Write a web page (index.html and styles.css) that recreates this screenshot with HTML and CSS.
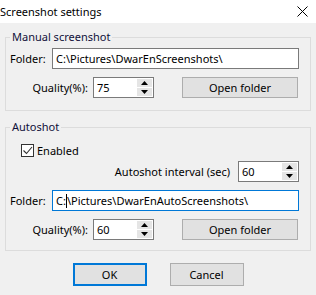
FILE: index.html
```html
<!DOCTYPE html>
<html lang="en">
<head>
    <meta charset="UTF-8">
    <title>Screenshot settings</title>
    <link rel="stylesheet" href="styles.css">
</head>
<body>
    <div class="titlebar">
        <span class="title">Screenshot settings</span>
        <svg class="close" width="11" height="11" viewBox="0 0 11 11">
            <path d="M0.5 0.5 L10.5 10.5 M10.5 0.5 L0.5 10.5" stroke="#000" stroke-width="1" fill="none"/>
        </svg>
    </div>

    <div class="dialog">
        <fieldset class="group manual">
            <legend>Manual screenshot</legend>
            <div class="row folder-row">
                <label class="folder-label">Folder:</label>
                <input class="text" type="text" value="C:\Pictures\DwarEnScreenshots\">
            </div>
            <div class="row quality-row">
                <label class="quality-label">Quality(%):</label>
                <div class="spin">
                    <span class="spin-value">75</span>
                    <div class="spin-buttons">
                        <span class="spin-btn"><svg width="7" height="4" viewBox="0 0 7 4"><path d="M3.5 0 L7 4 L0 4 Z" fill="#000"/></svg></span>
                        <span class="spin-btn"><svg width="7" height="4" viewBox="0 0 7 4"><path d="M0 0 L7 0 L3.5 4 Z" fill="#000"/></svg></span>
                    </div>
                </div>
                <button class="btn open-btn">Open folder</button>
            </div>
        </fieldset>

        <fieldset class="group auto">
            <legend>Autoshot</legend>
            <div class="row check-row">
                <span class="checkbox">
                    <svg width="11" height="11" viewBox="0 0 11 11"><path d="M1.5 5.5 L4.5 8.5 L10 2" stroke="#333" stroke-width="1.1" fill="none"/></svg>
                </span>
                <span class="check-label">Enabled</span>
            </div>
            <div class="row interval-row">
                <label class="interval-label">Autoshot interval (sec)</label>
                <div class="spin">
                    <span class="spin-value">60</span>
                    <div class="spin-buttons">
                        <span class="spin-btn"><svg width="7" height="4" viewBox="0 0 7 4"><path d="M3.5 0 L7 4 L0 4 Z" fill="#000"/></svg></span>
                        <span class="spin-btn"><svg width="7" height="4" viewBox="0 0 7 4"><path d="M0 0 L7 0 L3.5 4 Z" fill="#000"/></svg></span>
                    </div>
                </div>
            </div>
            <div class="row folder-row">
                <label class="folder-label">Folder:</label>
                <div class="text focused">C:<span class="caret"></span>\Pictures\DwarEnAutoScreenshots\</div>
            </div>
            <div class="row quality-row">
                <label class="quality-label">Quality(%):</label>
                <div class="spin">
                    <span class="spin-value">60</span>
                    <div class="spin-buttons">
                        <span class="spin-btn"><svg width="7" height="4" viewBox="0 0 7 4"><path d="M3.5 0 L7 4 L0 4 Z" fill="#000"/></svg></span>
                        <span class="spin-btn"><svg width="7" height="4" viewBox="0 0 7 4"><path d="M0 0 L7 0 L3.5 4 Z" fill="#000"/></svg></span>
                    </div>
                </div>
                <button class="btn open-btn">Open folder</button>
            </div>
        </fieldset>

        <div class="actions">
            <button class="btn action-btn default">OK</button>
            <button class="btn action-btn">Cancel</button>
        </div>
    </div>
</body>
</html>
```

FILE: styles.css
```css
* {
    box-sizing: border-box;
}

body {
    margin: 0;
    width: 316px;
    height: 295px;
    background-color: #f0f0f0;
    font-family: 'Noto Sans', sans-serif;
    font-size: 11px;
    color: #000;
    overflow: hidden;
}

.titlebar {
    height: 23px;
    background-color: #fff;
    display: flex;
    align-items: center;
    justify-content: space-between;
    padding: 0 8px 0 0;
}

.title {
    font-size: 11px;
    line-height: 16px;
}

.close {
    display: block;
}

.dialog {
    padding: 0 5px;
}

.group {
    margin: 0;
    padding: 0 11px 0 4px;
    border: 1px solid #dcdcdc;
    min-width: 0;
}

.group legend {
    padding: 0 2px;
    margin-left: 0;
    line-height: 16px;
    color: #10103a;
}

.manual {
    margin-top: 6px;
    padding-bottom: 12px;
}

.auto {
    margin-top: 8px;
    padding-bottom: 10px;
}

.row {
    display: flex;
    align-items: center;
}

.folder-row {
    margin-top: 8px;
    height: 21px;
}

.manual .folder-row {
    margin-top: 3px;
}

.folder-label {
    width: 42px;
    flex-shrink: 0;
}

.text {
    flex: 1;
    height: 21px;
    border: 1px solid #7a7a7a;
    background-color: #fff;
    font-family: inherit;
    font-size: 11px;
    padding: 0 3px;
    line-height: 19px;
    color: #000;
    outline: none;
    white-space: nowrap;
    overflow: hidden;
}

.focused {
    border-color: #0078d7;
}

.caret {
    display: inline-block;
    width: 1px;
    height: 14px;
    background-color: #000;
    vertical-align: -3px;
}

.quality-row {
    margin-top: 8px;
    height: 21px;
}

.quality-label {
    width: 78px;
    text-align: right;
    margin-right: 5px;
}

.spin {
    width: 61px;
    height: 21px;
    border: 1px solid #7a7a7a;
    background-color: #fff;
    display: flex;
    align-items: center;
    justify-content: space-between;
    padding: 0 1px 0 3px;
}

.spin-value {
    line-height: 19px;
}

.spin-buttons {
    display: flex;
    flex-direction: column;
    gap: 1px;
}

.spin-btn {
    width: 15px;
    height: 8px;
    background-color: #e5e5e5;
    display: flex;
    align-items: center;
    justify-content: center;
}

.spin-btn svg {
    display: block;
}

.btn {
    font-family: inherit;
    font-size: 11px;
    color: #000;
    background-color: #e1e1e1;
    border: 1px solid #adadad;
    padding: 0;
}

.open-btn {
    margin-left: 28px;
    width: 116px;
    height: 21px;
}

.check-row {
    margin-top: 9px;
    height: 13px;
}

.checkbox {
    width: 13px;
    height: 13px;
    margin-left: 11px;
    border: 1px solid #333;
    background-color: #fff;
    display: flex;
    align-items: center;
    justify-content: center;
}

.checkbox svg {
    display: block;
}

.check-label {
    margin-left: 3px;
}

.interval-row {
    margin-top: 4px;
    justify-content: flex-end;
    height: 21px;
}

.interval-label {
    margin-right: 8px;
}

.actions {
    display: flex;
    justify-content: center;
    gap: 23px;
    margin-top: 12px;
}

.action-btn {
    width: 74px;
    height: 23px;
}

.default {
    border: 2px solid #0078d7;
}
```
